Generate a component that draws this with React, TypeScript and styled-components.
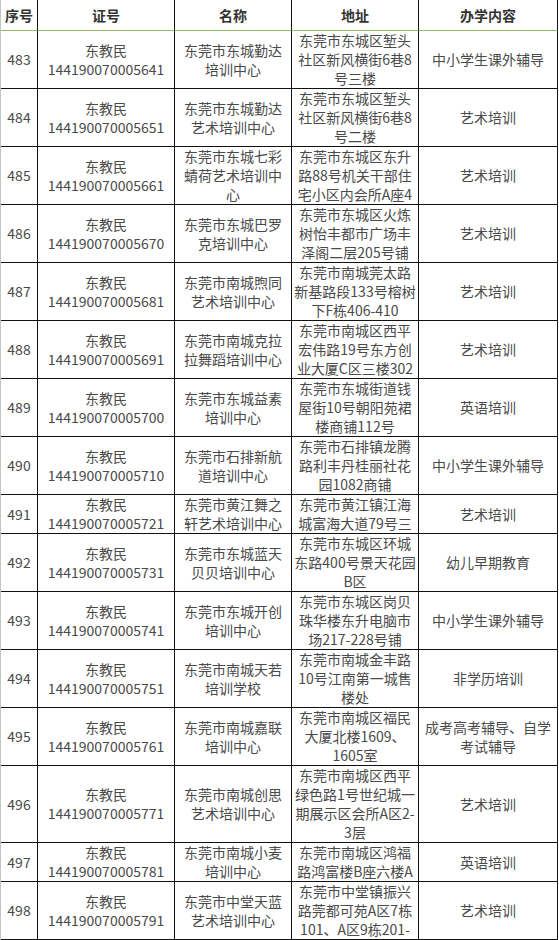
import styled, { createGlobalStyle } from 'styled-components';

const GlobalStyle = createGlobalStyle`
	html, body {
		margin: 0;
		padding: 0;
		background: #fff;
	}
	body {
		font-family: 'Noto Sans CJK SC', 'Noto Sans', sans-serif;
	}
`;

const COLUMNS = '37px 137px 117px 127px 139px';

const Table = styled.div`
	width: 558px;
	border-left: 1px solid #c4c4c4;
	box-sizing: border-box;
	overflow: hidden;
`;

const Row = styled.div`
	display: grid;
	grid-template-columns: ${COLUMNS};
`;

const HeadCell = styled.div`
	height: 31px;
	box-sizing: border-box;
	border-right: 1px solid #111;
	border-bottom: 1px solid #93b56c;
	display: flex;
	align-items: center;
	justify-content: center;
	font-size: 14px;
	font-weight: bold;
	color: #333;
	white-space: nowrap;
`;

const Cell = styled.div`
	box-sizing: border-box;
	border-right: 1px solid #111;
	border-bottom: 1px solid #111;
	display: flex;
	flex-direction: column;
	align-items: center;
	justify-content: center;
	font-size: 14px;
	line-height: 19px;
	color: #4a4a4a;
	text-align: center;
	overflow: hidden;
`;

const Line = styled.span`
	display: block;
	white-space: nowrap;
`;

type Item = {
	no: string;
	code: string;
	name: string[];
	addr: string[];
	scope: string[];
};

const rows: Item[] = [
	{ no: '483', code: '144190070005641', name: ['东莞市东城勤达', '培训中心'], addr: ['东莞市东城区堑头', '社区新风横街6巷8', '号三楼'], scope: ['中小学生课外辅导'] },
	{ no: '484', code: '144190070005651', name: ['东莞市东城勤达', '艺术培训中心'], addr: ['东莞市东城区堑头', '社区新风横街6巷8', '号二楼'], scope: ['艺术培训'] },
	{ no: '485', code: '144190070005661', name: ['东莞市东城七彩', '蜻荷艺术培训中', '心'], addr: ['东莞市东城区东升', '路88号机关干部住', '宅小区内会所A座4'], scope: ['艺术培训'] },
	{ no: '486', code: '144190070005670', name: ['东莞市东城巴罗', '克培训中心'], addr: ['东莞市东城区火炼', '树怡丰都市广场丰', '泽阁二层205号铺'], scope: ['艺术培训'] },
	{ no: '487', code: '144190070005681', name: ['东莞市南城煦同', '艺术培训中心'], addr: ['东莞市南城莞太路', '新基路段133号榕树', '下F栋406-410'], scope: ['艺术培训'] },
	{ no: '488', code: '144190070005691', name: ['东莞市南城克拉', '拉舞蹈培训中心'], addr: ['东莞市南城区西平', '宏伟路19号东方创', '业大厦C区三楼302'], scope: ['艺术培训'] },
	{ no: '489', code: '144190070005700', name: ['东莞市东城益素', '培训中心'], addr: ['东莞市东城街道钱', '屋街10号朝阳苑裙', '楼商铺112号'], scope: ['英语培训'] },
	{ no: '490', code: '144190070005710', name: ['东莞市石排新航', '道培训中心'], addr: ['东莞市石排镇龙腾', '路利丰丹桂丽社花', '园1082商铺'], scope: ['中小学生课外辅导'] },
	{ no: '491', code: '144190070005721', name: ['东莞市黄江舞之', '轩艺术培训中心'], addr: ['东莞市黄江镇江海', '城富海大道79号三'], scope: ['艺术培训'] },
	{ no: '492', code: '144190070005731', name: ['东莞市东城蓝天', '贝贝培训中心'], addr: ['东莞市东城区环城', '东路400号景天花园', 'B区'], scope: ['幼儿早期教育'] },
	{ no: '493', code: '144190070005741', name: ['东莞市东城开创', '培训中心'], addr: ['东莞市东城区岗贝', '珠华楼东升电脑市', '场217-228号铺'], scope: ['中小学生课外辅导'] },
	{ no: '494', code: '144190070005751', name: ['东莞市南城天若', '培训学校'], addr: ['东莞市南城金丰路', '10号江南第一城售', '楼处'], scope: ['非学历培训'] },
	{ no: '495', code: '144190070005761', name: ['东莞市南城嘉联', '培训中心'], addr: ['东莞市南城区福民', '大厦北楼1609、', '1605室'], scope: ['成考高考辅导、自学', '考试辅导'] },
	{ no: '496', code: '144190070005771', name: ['东莞市南城创思', '艺术培训中心'], addr: ['东莞市南城区西平', '绿色路1号世纪城一', '期展示区会所A区2-', '3层'], scope: ['艺术培训'] },
	{ no: '497', code: '144190070005781', name: ['东莞市南城小麦', '培训中心'], addr: ['东莞市南城区鸿福', '路鸿富楼B座六楼A'], scope: ['英语培训'] },
	{ no: '498', code: '144190070005791', name: ['东莞市中堂天蓝', '艺术培训中心'], addr: ['东莞市中堂镇振兴', '路莞都可苑A区7栋', '101、A区9栋201-'], scope: ['艺术培训'] },
];

const headers = ['序号', '证号', '名称', '地址', '办学内容'];

const Lines = ({ items }: { items: string[] }) => (
	<>
		{items.map((t, i) => (
			<Line key={i}>{t}</Line>
		))}
	</>
);

export default function App() {
	return (
		<>
			<GlobalStyle />
			<Table>
				<Row>
					{headers.map((h) => (
						<HeadCell key={h}>{h}</HeadCell>
					))}
				</Row>
				{rows.map((r) => (
					<Row key={r.no}>
						<Cell>
							<Line>{r.no}</Line>
						</Cell>
						<Cell>
							<Lines items={['东教民', r.code]} />
						</Cell>
						<Cell>
							<Lines items={r.name} />
						</Cell>
						<Cell>
							<Lines items={r.addr} />
						</Cell>
						<Cell>
							<Lines items={r.scope} />
						</Cell>
					</Row>
				))}
			</Table>
		</>
	);
}
